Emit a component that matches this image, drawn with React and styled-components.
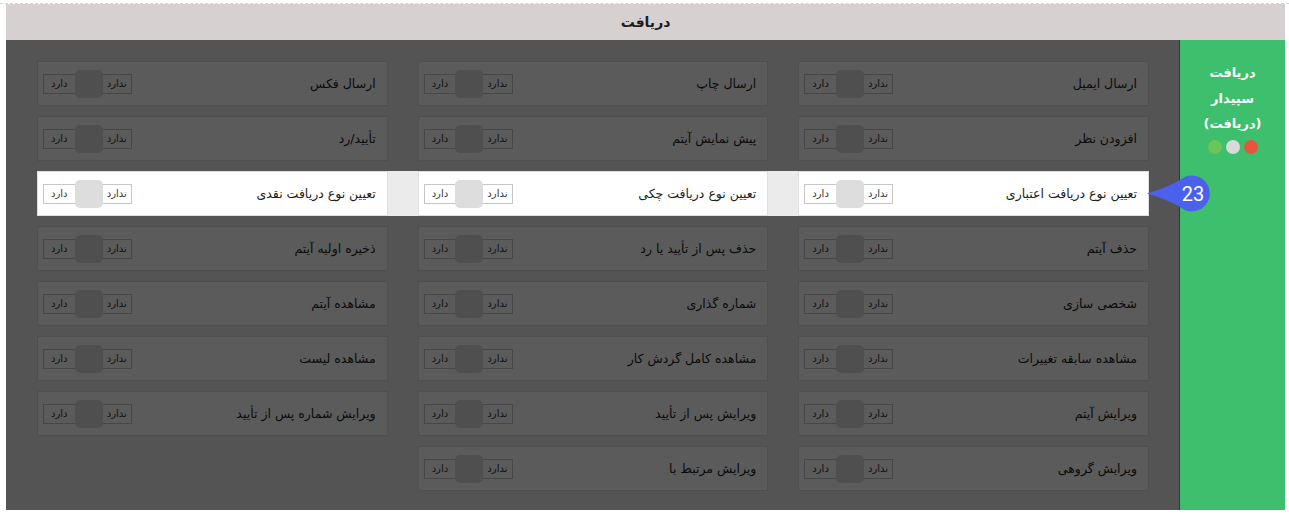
import React from "react";
import styled, { createGlobalStyle } from "styled-components";

const GlobalStyle = createGlobalStyle`
  html, body {
    margin: 0;
    padding: 0;
    background: #fff;
  }
  body {
    font-family: "DejaVu Sans", sans-serif;
  }
`;

const Page = styled.div`
  direction: rtl;
  width: 1289px;
  box-sizing: border-box;
  margin-top: 3px;
  border-top: 1px dashed #d6d6d6;
  padding: 0 4px 0 6px;
`;

const Header = styled.div`
  height: 36px;
  background: #d6d0d0;
  display: flex;
  align-items: center;
  justify-content: center;
  font-size: 14px;
  font-weight: bold;
  color: #1d1d1d;
`;

const Body = styled.div`
  display: flex;
  height: 470px;
`;

const Sidebar = styled.aside`
  flex: none;
  width: 105px;
  background: #3dbf6d;
  border-left: 1px solid #2b3830;
  display: flex;
  flex-direction: column;
  align-items: center;
  padding-top: 20px;
  color: #fff;
  font-size: 13px;
  font-weight: bold;
  line-height: 25.5px;
`;

const Dots = styled.div`
  display: flex;
  gap: 4px;
  margin-top: 3px;
`;

const Dot = styled.span`
  width: 14px;
  height: 14px;
  border-radius: 50%;
  background: ${(p) => p.$color};
`;

const Content = styled.main`
  position: relative;
  flex: 1;
  background: #ebebeb;
  padding: 21px 30px 19px 31px;
  display: flex;
  flex-direction: column;
  gap: 10px;
`;

// dark tour overlay above everything but the highlighted row
const Overlay = styled.div`
  position: absolute;
  inset: 0;
  background: rgba(0, 0, 0, 0.645);
  z-index: 1;
`;

const Row = styled.div`
  position: relative;
  display: grid;
  grid-template-columns: repeat(3, 1fr);
  column-gap: 30px;
  z-index: ${(p) => (p.$active ? 2 : 0)};
  background: ${(p) => (p.$active ? "#ebebeb" : "transparent")};
`;

const Card = styled.div`
  height: 45px;
  box-sizing: border-box;
  background: #fff;
  border: 1px solid #dedede;
  display: flex;
  align-items: center;
  justify-content: space-between;
  padding: 0 11px 0 5px;
`;

const Title = styled.span`
  font-size: 12.5px;
  color: #1e1e1e;
  white-space: nowrap;
`;

const Toggle = styled.div`
  direction: ltr;
  display: flex;
  align-items: center;
  width: 89px;
  height: 20px;
  box-sizing: border-box;
  border: 1px solid #c6c6c6;
`;

const ToggleLabel = styled.span`
  width: ${(p) => p.$w}px;
  text-align: center;
  font-size: 10px;
  color: #333;
  direction: rtl;
`;

const Knob = styled.span`
  width: 28px;
  height: 28px;
  flex: none;
  border-radius: 5px;
  background: #dddddd;
`;

const Badge = styled.svg`
  position: absolute;
  left: calc(100% - 3px);
  top: 4px;
  overflow: visible;
`;

const rows = [
  ["ارسال ایمیل", "ارسال چاپ", "ارسال فکس"],
  ["افزودن نظر", "پیش نمایش آیتم", "تأیید/رد"],
  ["تعیین نوع دریافت اعتباری", "تعیین نوع دریافت چکی", "تعیین نوع دریافت نقدی"],
  ["حذف آیتم", "حذف پس از تأیید یا رد", "ذخیره اولیه آیتم"],
  ["شخصی سازی", "شماره گذاری", "مشاهده آیتم"],
  ["مشاهده سابقه تغییرات", "مشاهده کامل گردش کار", "مشاهده لیست"],
  ["ویرایش آیتم", "ویرایش پس از تأیید", "ویرایش شماره پس از تأیید"],
  ["ویرایش گروهی", "ویرایش مرتبط با"],
];

function Switch() {
  return (
    <Toggle>
      <ToggleLabel $w={31}>دارد</ToggleLabel>
      <Knob />
      <ToggleLabel $w={29}>ندارد</ToggleLabel>
    </Toggle>
  );
}

function StepBadge({ n }) {
  return (
    <Badge width="66" height="37" viewBox="0 0 66 37">
      <path
        d="M1 18.5 Q24 12 39.6 1.6 A18 18 0 1 1 39.6 35.4 Q24 25 1 18.5 Z"
        fill="#4b61ee"
      />
      <text
        x="47"
        y="19"
        fill="#fff"
        fontFamily="Roboto, sans-serif"
        fontSize="20"
        textAnchor="middle"
        dominantBaseline="central"
      >
        {n}
      </text>
    </Badge>
  );
}

export default function App() {
  return (
    <>
      <GlobalStyle />
      <Page>
        <Header>دریافت</Header>
        <Body>
          <Sidebar>
            <span>دریافت</span>
            <span>سپیدار</span>
            <span>(دریافت)</span>
            <Dots>
              <Dot $color="#e8553e" />
              <Dot $color="#d9d9d9" />
              <Dot $color="#6cc55a" />
            </Dots>
          </Sidebar>
          <Content>
            <Overlay />
            {rows.map((items, i) => (
              <Row key={i} $active={i === 2}>
                {items.map((t) => (
                  <Card key={t}>
                    <Title>{t}</Title>
                    <Switch />
                  </Card>
                ))}
                {i === 2 && <StepBadge n={23} />}
              </Row>
            ))}
          </Content>
        </Body>
      </Page>
    </>
  );
}
